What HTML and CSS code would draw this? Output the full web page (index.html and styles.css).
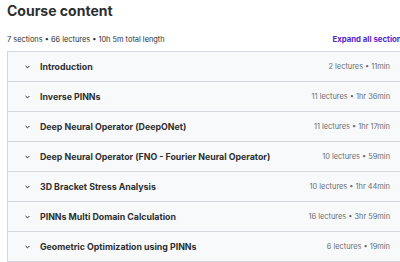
FILE: index.html
```html
<!DOCTYPE html>
<html lang="en">
<head>
    <meta charset="UTF-8">
    <title>Course content</title>
    <link rel="stylesheet" href="styles.css">
</head>
<body>
    <div class="course-content">
        <h2 class="title">Course content</h2>
        <div class="summary">
            <span>7 sections • 66 lectures • 10h 5m total length</span>
            <button class="expand-all">Expand all sections</button>
        </div>
        <div class="sections">
            <div class="section">
                <span class="chevron"><svg width="5" height="4" viewBox="0 0 5 4"><path d="M0.6 1 L2.5 2.9 L4.4 1" fill="none" stroke="#2d2f31" stroke-width="1"/></svg></span>
                <span class="section-title">Introduction</span>
                <span class="section-meta">2 lectures • 11min</span>
            </div>
            <div class="section">
                <span class="chevron"><svg width="5" height="4" viewBox="0 0 5 4"><path d="M0.6 1 L2.5 2.9 L4.4 1" fill="none" stroke="#2d2f31" stroke-width="1"/></svg></span>
                <span class="section-title">Inverse PINNs</span>
                <span class="section-meta">11 lectures • 1hr 36min</span>
            </div>
            <div class="section">
                <span class="chevron"><svg width="5" height="4" viewBox="0 0 5 4"><path d="M0.6 1 L2.5 2.9 L4.4 1" fill="none" stroke="#2d2f31" stroke-width="1"/></svg></span>
                <span class="section-title">Deep Neural Operator (DeepONet)</span>
                <span class="section-meta">11 lectures • 1hr 17min</span>
            </div>
            <div class="section">
                <span class="chevron"><svg width="5" height="4" viewBox="0 0 5 4"><path d="M0.6 1 L2.5 2.9 L4.4 1" fill="none" stroke="#2d2f31" stroke-width="1"/></svg></span>
                <span class="section-title">Deep Neural Operator (FNO - Fourier Neural Operator)</span>
                <span class="section-meta">10 lectures • 59min</span>
            </div>
            <div class="section">
                <span class="chevron"><svg width="5" height="4" viewBox="0 0 5 4"><path d="M0.6 1 L2.5 2.9 L4.4 1" fill="none" stroke="#2d2f31" stroke-width="1"/></svg></span>
                <span class="section-title">3D Bracket Stress Analysis</span>
                <span class="section-meta">10 lectures • 1hr 44min</span>
            </div>
            <div class="section">
                <span class="chevron"><svg width="5" height="4" viewBox="0 0 5 4"><path d="M0.6 1 L2.5 2.9 L4.4 1" fill="none" stroke="#2d2f31" stroke-width="1"/></svg></span>
                <span class="section-title">PINNs Multi Domain Calculation</span>
                <span class="section-meta">16 lectures • 3hr 59min</span>
            </div>
            <div class="section">
                <span class="chevron"><svg width="5" height="4" viewBox="0 0 5 4"><path d="M0.6 1 L2.5 2.9 L4.4 1" fill="none" stroke="#2d2f31" stroke-width="1"/></svg></span>
                <span class="section-title">Geometric Optimization using PINNs</span>
                <span class="section-meta">6 lectures • 19min</span>
            </div>
        </div>
    </div>
</body>
</html>
```

FILE: styles.css
```css
:root {
    --text-color: #2d2f31;
    --muted-color: #6a6f73;
    --accent-color: #5624d0;
    --border-color: #d1d7dc;
    --row-bg: #f7f9fa;
}

* {
    box-sizing: border-box;
}

html, body {
    overflow: hidden;
}

body {
    margin: 0;
    padding: 0 0 0 7px;
    background: white;
    font-family: Inter, 'Noto Sans', Arial, sans-serif;
    color: var(--text-color);
}

.course-content {
    width: 399px;
}

.title {
    font-size: 14px;
    font-weight: 700;
    margin: 2px 0 0;
    line-height: 18px;
}

.summary {
    display: flex;
    justify-content: space-between;
    align-items: center;
    margin-top: 13px;
    margin-bottom: 6px;
    height: 12px;
    font-size: 7.4px;
}

.expand-all {
    border: none;
    background: none;
    padding: 0;
    font-family: inherit;
    font-size: 7.8px;
    font-weight: 700;
    color: var(--accent-color);
    white-space: nowrap;
}

.sections {
    border: 1px solid var(--border-color);
    border-right: none;
}

.section {
    display: flex;
    align-items: center;
    height: 30px;
    padding: 0 16px 0 17px;
    background: var(--row-bg);
    border-bottom: 1px solid var(--border-color);
}

.chevron {
    display: flex;
    width: 5px;
    margin-right: 10px;
}

.section-title {
    flex: 1;
    font-size: 8.8px;
    font-weight: 700;
    white-space: nowrap;
}

.section-meta {
    font-size: 7.4px;
    color: var(--muted-color);
    white-space: nowrap;
}
```
